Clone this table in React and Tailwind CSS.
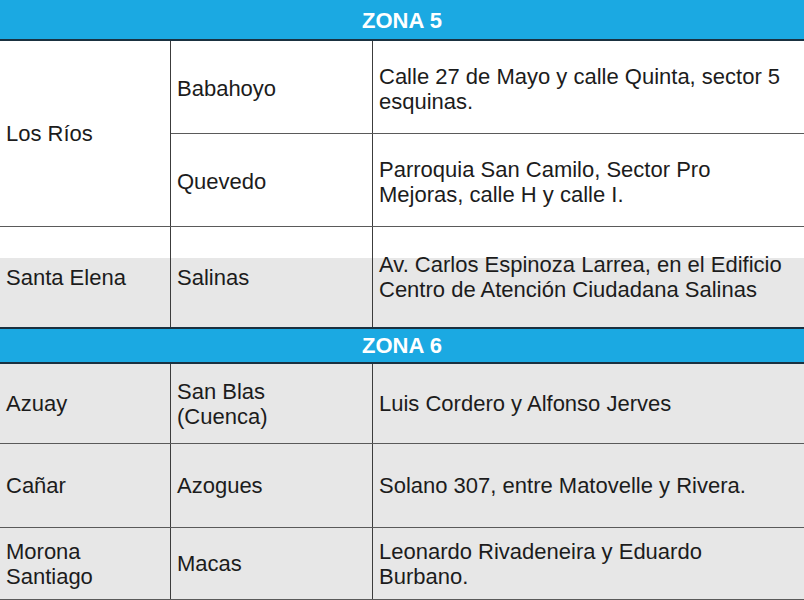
import React from "react";

const zona5 = [
  {
    provincia: ["Los Ríos"],
    sedes: [
      { ciudad: ["Babahoyo"], direccion: ["Calle 27 de Mayo y calle Quinta, sector 5", "esquinas."], h: "h-[93px]" },
      { ciudad: ["Quevedo"], direccion: ["Parroquia San Camilo, Sector Pro", "Mejoras, calle H y calle I."], h: "h-[92px]" },
    ],
  },
];

const zona6 = [
  { provincia: ["Azuay"], ciudad: ["San Blas", "(Cuenca)"], direccion: ["Luis Cordero y Alfonso Jerves"], h: "h-[80px]" },
  { provincia: ["Cañar"], ciudad: ["Azogues"], direccion: ["Solano 307, entre Matovelle y Rivera."], h: "h-[84px]" },
  { provincia: ["Morona", "Santiago"], ciudad: ["Macas"], direccion: ["Leonardo Rivadeneira y Eduardo", "Burbano."], h: "h-[72px]" },
];

const ZonaHeader = ({ title, top }) => (
  <div
    className={
      "flex items-center justify-center bg-[#1ba9e2] border-b-2 border-[#1a3140] " +
      (top ? "h-[41px] pt-[1px]" : "h-[37px] border-t-2")
    }
  >
    <span className="text-white font-bold text-[22px] leading-[25px]">{title}</span>
  </div>
);

const Cell = ({ lines, className = "" }) => (
  <div className={"flex items-center px-[6px] border-[#3c3c3c] " + className}>
    <span className="whitespace-nowrap leading-[25px]">
      {lines.map((l, i) => (
        <React.Fragment key={i}>
          {i > 0 && <br />}
          {l}
        </React.Fragment>
      ))}
    </span>
  </div>
);

export default function App() {
  return (
    <div className="w-[804px] h-[600px] overflow-hidden bg-white text-[#1c1c1c] text-[22px] font-['Liberation_Sans',Arial,sans-serif]">
      <ZonaHeader title="ZONA 5" top />

      {/* Los Ríos */}
      {zona5.map((p) => (
        <div key={p.provincia[0]} className="grid grid-cols-[171px_1fr] border-b border-[#5a5a5a]">
          <Cell lines={p.provincia} className="border-r" />
          <div>
            {p.sedes.map((s, i) => (
              <div
                key={s.ciudad[0]}
                className={"grid grid-cols-[202px_1fr] " + s.h + (i === 0 ? " border-b border-[#5a5a5a]" : "")}
              >
                <Cell lines={s.ciudad} className="border-r pt-[3px]" />
                <Cell lines={s.direccion} className="pt-[3px]" />
              </div>
            ))}
          </div>
        </div>
      ))}

      {/* Santa Elena */}
      <div className="grid grid-cols-[171px_202px_1fr] h-[100px] bg-[linear-gradient(to_bottom,#ffffff_31px,#e7e7e7_31px)]">
        <Cell lines={["Santa Elena"]} className="border-r" />
        <Cell lines={["Salinas"]} className="border-r" />
        <Cell lines={["Av. Carlos Espinoza Larrea, en el Edificio", "Centro de Atención Ciudadana Salinas"]} />
      </div>

      <ZonaHeader title="ZONA 6" />

      <div className="bg-[#e7e7e7]">
        {zona6.map((r) => (
          <div key={r.provincia[0]} className={"grid grid-cols-[171px_202px_1fr] border-b border-[#5a5a5a] " + r.h}>
            <Cell lines={r.provincia} className="border-r" />
            <Cell lines={r.ciudad} className="border-r" />
            <Cell lines={r.direccion} />
          </div>
        ))}
      </div>
    </div>
  );
}
